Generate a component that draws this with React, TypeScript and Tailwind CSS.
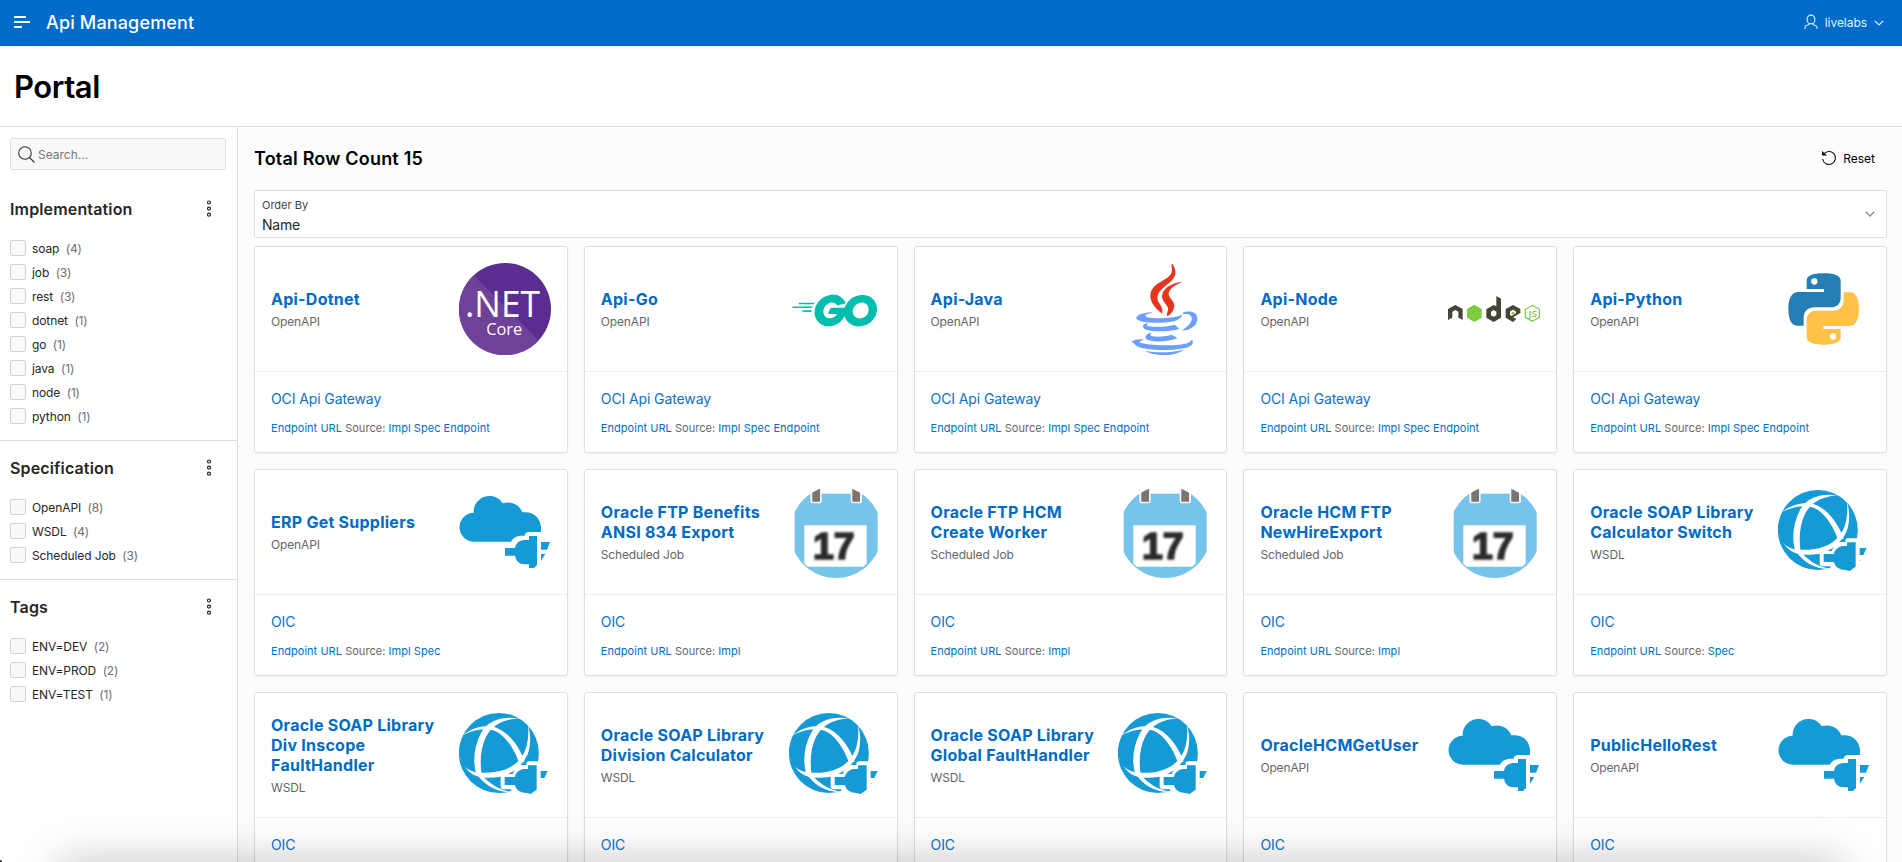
import type { ReactNode } from "react";
import { SiGo } from "react-icons/si";

type Facet = { title: string; items: [string, number][] };
type Api = {
  name: string;
  spec: string;
  impl: string;
  sources?: string;
  icon: ReactNode;
};

function DotnetIcon() {
  return (
    <svg viewBox="0 0 92 92" className="size-[92px]">
      <circle cx="46" cy="46" r="46" fill="#5c2d91" />
      <path d="M14.6 12.4 A46 46 0 1 0 79.6 77.4 Z" fill="#6f4299" />
      <g fill="#fff" fontFamily="Open Sans, Noto Sans, sans-serif">
        <text x="6" y="53.6" fontSize="37" fontWeight="400" textLength="75" lengthAdjust="spacingAndGlyphs">.NET</text>
        <text x="27.2" y="71.8" fontSize="17" fontWeight="400" textLength="36" lengthAdjust="spacingAndGlyphs">Core</text>
      </g>
    </svg>
  );
}

function GoIcon() {
  return (
    <div className="flex size-[92px] items-center justify-center pt-[3px]">
      <SiGo className="size-[85px] text-[#00bdae]" />
    </div>
  );
}

function JavaIcon() {
  return (
    <svg viewBox="1046 69 276 276" className="size-[92px]">
      <g fill="#e5351f">
        <path d="M1209 71 C1232 106 1208 122 1188 138 C1158 162 1160 178 1174 196 C1180 206 1180 212 1178 221 C1158 204 1142 188 1143 165 C1145 138 1172 128 1192 115 C1210 102 1210 90 1206 74 Z" />
        <path d="M1236 127 C1218 136 1200 146 1198 160 C1197 174 1214 182 1215 196 C1215 210 1206 222 1194 229 C1190 222 1198 212 1196 204 C1192 192 1178 184 1178 168 C1179 144 1208 130 1236 125 Z" />
      </g>
      <g fill="#6b9ff9">
        <path d="M1148 217 C1112 219 1098 228 1102 237 C1110 247 1145 249 1172 248 C1205 247 1232 244 1239 224 C1215 234 1180 236 1152 234 C1124 232 1118 224 1148 219 Z" />
        <path d="M1240 218 C1262 210 1284 216 1284 236 C1284 258 1262 270 1238 272 C1252 260 1270 248 1267 233 C1264 220 1252 221 1242 223 Z" />
        <path d="M1133 250 C1116 254 1118 264 1130 269 C1158 277 1200 275 1230 266 L1216 254 C1188 261 1160 262 1140 259 C1130 257 1130 254 1138 251 Z" />
        <path d="M1143 279 C1128 283 1124 293 1133 299 C1158 308 1198 305 1225 295 L1207 284 C1185 290 1166 291 1150 289 C1141 287 1142 283 1147 280 Z" />
        <path d="M1086 305 C1098 298 1112 297 1124 299 C1116 301 1110 305 1109 307 C1135 318 1215 318 1248 311 C1262 308 1266 303 1267 298 C1275 307 1270 318 1252 323 C1205 333 1140 332 1108 321 C1098 317 1096 309 1086 305 Z" />
        <path d="M1127 332 C1165 340 1210 337 1244 329 C1225 343 1200 345 1181 345 C1160 344 1140 341 1127 332 Z" />
      </g>
    </svg>
  );
}

function NodeIcon() {
  return (
    <svg viewBox="55 -21 276 276" className="size-[92px]">
      <g fill="#454538" fillRule="evenodd">
        <path d="M55 150 V117 L77 105 L99 117 V150 L86 143 V125 L77 120 L68 125 V143 Z" />
        <path d="M170 118 L192 105 L200 109 V78 L214 86 V143 L192 156 L170 143 Z M192 120 L184 125 V135.500 L192 140.500 L200 135.500 V125 Z" />
        <path d="M250 105 L272 117 V129 L253 140 L250 141.500 L260 147 L250 156 L228 143 V117 Z M250 119 L241 124.500 V135 L246 138 L259 130 V124.500 Z" />
      </g>
      <g fill="#7dcb3f">
        <path d="M134 104 L156 117 V143 L134 156 L112 143 V117 Z" />
        <circle cx="250" cy="130" r="4.500" />
      </g>
      <path d="M308 106 L329 118 V142 L308 154 L287 142 V118 Z" fill="none" stroke="#7dcb3f" strokeWidth="3.600" />
      <text x="296.500" y="139.500" fill="#7dcb3f" fontFamily="Open Sans, sans-serif" fontWeight="600" fontSize="26" textLength="26" lengthAdjust="spacingAndGlyphs">JS</text>
    </svg>
  );
}

function PythonIcon() {
  const half =
    "M1182 100 C1146 100 1131 108 1131 122 V147 H1183 V156 H1104 C1084 157 1076 180 1076 207 C1076 236 1084 257 1103 257 H1122 V232 C1122 214 1136 202 1154 202 H1206 C1222 202 1233 190 1233 175 V122 C1233 108 1216 100 1182 100 Z M1154 115 A9.500 9.500 0 1 1 1154 134 A9.500 9.500 0 1 1 1154 115 Z";
  return (
    <svg viewBox="1045 69 276 276" className="size-[92px]" fillRule="evenodd">
      <path d={half} fill="#257fb5" />
      <path d={half} fill="#ffc148" transform="rotate(180 1182 207)" />
    </svg>
  );
}

function CloudIcon() {
  return (
    <svg viewBox="57 48 276 276" className="size-[92px]" fill="#169ad6">
      <path d="M103 215 A43.500 43.500 0 0 1 101 128 C99 102 120 78 148 78 C166 78 180 86 188 100 C212 92 238 103 247 127 C290 122 308 156 302 186 H268 Q255 186 254 197 H243 Q221 198 213 215 Z" />
      <path d="M267 198 H291 V285 L282 294 H267 V283 H254 Q228 281 225 257 H195 V234 H225 Q228 213 250 210 H267 Z" />
      <path d="M303 216 H330 L321 239 H303 Z M303 252 H316 L303 272 Z" />
    </svg>
  );
}

function CalendarIcon() {
  return (
    <svg viewBox="1046 48 276 276" className="size-[92px]">
      <defs>
        <clipPath id="calendar-disc">
          <circle cx="1187" cy="186" r="138" />
        </clipPath>
        <filter id="calendar-soft">
          <feGaussianBlur stdDeviation="2.800" />
        </filter>
      </defs>
      <g clipPath="url(#calendar-disc)">
        <rect x="1063" y="71" width="249" height="260" fill="#76c4ea" />
        <path d="M1110 48 H1144 V92 Q1144 100 1136 100 H1118 Q1110 100 1110 92 Z M1231 48 H1265 V92 Q1265 100 1257 100 H1239 Q1231 100 1231 92 Z" fill="#f4f4f4" />
        <path d="M1116 48 H1139 V95 H1116 Z M1236 48 H1259 V95 H1236 Z" fill="#7c7472" />
        <path d="M1092 166 H1279 V280 L1269 290 H1102 L1092 280 Z" fill="#fff" />
        <text x="1118" y="268" fill="#2b2b2b" stroke="#2b2b2b" strokeWidth="5" filter="url(#calendar-soft)" fontFamily="Liberation Sans, sans-serif" fontWeight="700" fontSize="111" textLength="125" lengthAdjust="spacingAndGlyphs">17</text>
      </g>
    </svg>
  );
}

function GlobeIcon() {
  return (
    <svg viewBox="115 48 276 276" className="size-[92px]">
      <circle cx="234.500" cy="180" r="120" fill="#169ad6" />
      <g fill="#fff">
        <path d="M126 127 C150 107 180 98 210 99 C255 108 292 150 312 206 L294 206 C278 162 252 126 222 113 C190 104 160 109 126 127 Z" />
        <path d="M294 76 C240 68 200 84 181 120 C160 160 156 205 166 240 C190 276 225 298 272 297 C230 288 205 270 183 245 C177 205 180 165 196 132 C215 95 248 80 294 76 Z" />
        <path d="M116 188 C126 222 146 238 180 239 C230 242 268 230 293 204 C318 178 326 140 322 95 C331 125 331 160 320 186 C304 220 275 243 236 252 C195 258 160 254 140 230 C126 212 118 200 116 188 Z" />
        <path d="M240 243 H276 Q284 222 302 216 H318 Q314 206 326 205 H362 V304 H272 V289 H250 Q240 289 240 279 Z" />
      </g>
      <g fill="#169ad6">
        <path d="M322 217 H348 V290 L330 303 L318 300 Q290 300 282 276 H252 V252 H282 Q288 232 308 228 H322 Z" />
        <path d="M360 234 H381 L371 255 H360 Z" />
        <path d="M360 270 h3 l-3 4 Z" />
      </g>
    </svg>
  );
}

const facets: Facet[] = [
  {
    title: "Implementation",
    items: [["soap", 4], ["job", 3], ["rest", 3], ["dotnet", 1], ["go", 1], ["java", 1], ["node", 1], ["python", 1]],
  },
  { title: "Specification", items: [["OpenAPI", 8], ["WSDL", 4], ["Scheduled Job", 3]] },
  { title: "Tags", items: [["ENV=DEV", 2], ["ENV=PROD", 2], ["ENV=TEST", 1]] },
];

const gateway = { spec: "OpenAPI", impl: "OCI Api Gateway", sources: "Impl Spec Endpoint" };
const job = { spec: "Scheduled Job", impl: "OIC", sources: "Impl", icon: <CalendarIcon /> };
const soap = { spec: "WSDL", impl: "OIC", icon: <GlobeIcon /> };
const cloud = { spec: "OpenAPI", impl: "OIC", icon: <CloudIcon /> };

const apis: Api[] = [
  { name: "Api-Dotnet", ...gateway, icon: <DotnetIcon /> },
  { name: "Api-Go", ...gateway, icon: <GoIcon /> },
  { name: "Api-Java", ...gateway, icon: <JavaIcon /> },
  { name: "Api-Node", ...gateway, icon: <NodeIcon /> },
  { name: "Api-Python", ...gateway, icon: <PythonIcon /> },
  { name: "ERP Get Suppliers", ...cloud, sources: "Impl Spec" },
  { name: "Oracle FTP Benefits ANSI 834 Export", ...job },
  { name: "Oracle FTP HCM Create Worker", ...job },
  { name: "Oracle HCM FTP NewHireExport", ...job },
  { name: "Oracle SOAP Library Calculator Switch", ...soap, sources: "Spec" },
  { name: "Oracle SOAP Library Div Inscope FaultHandler", ...soap },
  { name: "Oracle SOAP Library Division Calculator", ...soap },
  { name: "Oracle SOAP Library Global FaultHandler", ...soap },
  { name: "OracleHCMGetUser", ...cloud },
  { name: "PublicHelloRest", ...cloud },
];

function Header() {
  return (
    <header className="flex h-[46px] shrink-0 items-center border-b border-[#0062b8] bg-[#006bc8] pr-[18px] pl-[14px] text-white">
      <svg viewBox="0 0 16 12" className="mb-px h-3 w-4" fill="#fff">
        <rect width="12" height="2" rx="0.500" />
        <rect y="5" width="16" height="2" rx="0.500" />
        <rect y="10" width="8" height="2" rx="0.500" />
      </svg>
      <span className="ml-4 text-[18px] font-medium tracking-[0.15px]">Api Management</span>
      <button className="ml-auto flex items-center text-xs tracking-[-0.05px] text-[#e6f1fa]">
        <svg viewBox="0 0 14 16" className="mr-[7px] mb-0.5 h-4 w-[14px]" fill="none" stroke="currentColor" strokeWidth="1.100">
          <ellipse cx="7" cy="5.500" rx="3.900" ry="4.400" />
          <path d="M1 15 V13.500 Q1 12 2.500 11.500 L5 10.700 V9.300 M13 15 V13.500 Q13 12 11.500 11.500 L9 10.700 V9.300" />
        </svg>
        livelabs
        <svg viewBox="0 0 10 6" className="ml-[7px] h-1.5 w-2.5" fill="none" stroke="currentColor" strokeWidth="1.200">
          <path d="M0.800 0.800 L5 5 L9.200 0.800" />
        </svg>
      </button>
    </header>
  );
}

function FacetSection({ facet, last }: { facet: Facet; last: boolean }) {
  return (
    <section className={last ? "px-2.5 pt-[15px]" : "border-b border-[#dedede] px-2.5 pt-[15px] pb-4"}>
      <div className="flex h-6 items-center justify-between">
        <h3 className="text-[16px] font-semibold tracking-[0.15px] text-[#262626]">{facet.title}</h3>
        <svg viewBox="0 0 6 18" className="mr-[15px] h-[18px] w-1.5" fill="none" stroke="#262626" strokeWidth="1.200">
          <circle cx="3" cy="2.500" r="1.500" />
          <circle cx="3" cy="8.600" r="1.500" />
          <circle cx="3" cy="14.700" r="1.500" />
        </svg>
      </div>
      <ul className="mt-[19px] flex flex-col gap-2">
        {facet.items.map(([label, count]) => (
          <li key={label} className="flex h-4 items-center text-xs text-[#262626]">
            <span className="size-4 rounded-[2px] border border-[#d2d2d2] bg-[#f9f9f9]" />
            <span className="mt-0.5 ml-[6px] tracking-[-0.1px]">{label}</span>
            <span className="mt-0.5 ml-[6.500px] tracking-[-0.2px] text-[#6e6e6e]">({count})</span>
          </li>
        ))}
      </ul>
    </section>
  );
}

function Sidebar() {
  return (
    <aside className="w-[238px] shrink-0 border-r border-[#dedede] bg-white">
      <div className="px-2.5 pt-[11px] pb-3">
        <div className="flex h-8 w-[216px] items-center rounded-[2px] border border-[#dfdfdf] bg-[#f9f9f9] pl-[7px]">
          <svg viewBox="0 0 17 17" className="size-[17px]" fill="none" stroke="#333" strokeWidth="1.100">
            <circle cx="7" cy="7" r="6.300" />
            <path d="M11.500 11.500 L16.500 16.500" />
          </svg>
          <span className="mt-px ml-[3px] text-xs text-[#757575]">Search...</span>
        </div>
      </div>
      {facets.map((facet, i) => (
        <FacetSection key={facet.title} facet={facet} last={i === facets.length - 1} />
      ))}
    </aside>
  );
}

function ApiCard({ api }: { api: Api }) {
  return (
    <article className="h-[207px] rounded-[3px] border border-[#dfdfdf] bg-white shadow-[0_1px_3px_rgba(0,0,0,0.05)]">
      <div className="flex h-[125px] items-center gap-3 border-b border-[#eeeeee] px-4">
        <div className="min-w-0 flex-1">
          <h4 className="text-[16px] leading-5 font-bold tracking-[0.25px] text-[#006bc4]">{api.name}</h4>
          <p className="mt-[5px] -mb-px text-xs leading-4 tracking-[-0.15px] text-[#666]">{api.spec}</p>
        </div>
        {api.icon}
      </div>
      <div className="px-4 pt-[17px]">
        <p className="text-[14px] leading-5 tracking-[-0.11px] text-[#0a72c4]">{api.impl}</p>
        {api.sources && (
          <p className="mt-[11px] text-[11px] leading-4 tracking-[0.04px] text-[#006fc4]">
            Endpoint URL <span className="text-[#666]">Source:</span> {api.sources}
          </p>
        )}
      </div>
    </article>
  );
}

export default function App() {
  return (
    <div className="relative flex h-[862px] w-full flex-col overflow-hidden bg-white font-['Inter','Liberation_Sans',sans-serif]">
      <Header />
      <div className="flex h-[81px] shrink-0 items-center border-b border-[#dedede] pt-[3px] pl-[14px]">
        <h1 className="text-[31px] font-semibold tracking-[-0.45px] text-black">Portal</h1>
      </div>
      <div className="flex min-h-0 flex-1">
        <Sidebar />
        <main className="min-w-0 flex-1 bg-[#fcfcfc] pr-[15px] pl-4">
          <div className="flex h-[63px] items-center justify-between pr-3">
            <h2 className="text-[18px] font-semibold tracking-[0.2px] text-black">Total Row Count 15</h2>
            <button className="flex items-center text-xs text-black">
              <svg viewBox="0 0 16 16" className="mr-1.5 mb-px size-4" fill="none" stroke="#111" strokeWidth="1.100">
                <path d="M2.500 4.500 A6.500 6.500 0 1 1 1.600 9" />
                <path d="M1 1 L6.300 5.500 H1 Z" fill="#111" stroke="none" />
              </svg>
              Reset
            </button>
          </div>
          <div className="flex h-12 items-center justify-between rounded-[2px] border border-[#dfdfdf] bg-white pr-[11px] pl-[7px]">
            <div className="pt-0.5">
              <div className="pt-px text-[11px] leading-4 text-[#444]">Order By</div>
              <div className="pt-0.5 text-[14px] leading-5 tracking-[-0.2px] text-[#262626]">Name</div>
            </div>
            <svg viewBox="0 0 10 6" className="h-1.5 w-2.5" fill="none" stroke="#8a8a8a" strokeWidth="1.300">
              <path d="M0.800 0.800 L5 5 L9.200 0.800" />
            </svg>
          </div>
          <div className="mt-2 grid grid-cols-5 gap-4">
            {apis.map((api) => (
              <ApiCard key={api.name} api={api} />
            ))}
          </div>
        </main>
      </div>
      <div className="pointer-events-none absolute top-full right-[60px] left-[60px] h-10 shadow-[0_0_44px_rgba(0,0,0,0.25)]" />
      <div className="pointer-events-none absolute bottom-0 left-0 size-0.5 rounded-tr-full bg-[#222]" />
    </div>
  );
}
